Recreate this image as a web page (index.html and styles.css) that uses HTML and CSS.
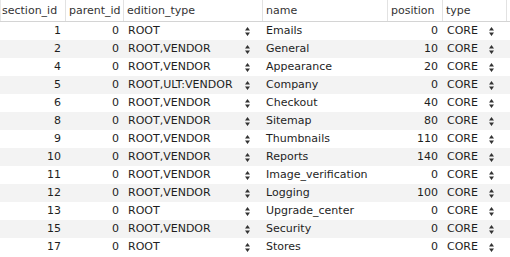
FILE: index.html
```html
<!DOCTYPE html>
<html>
<head>
<meta charset="utf-8">
<link rel="stylesheet" href="styles.css">
</head>
<body>
<div class="grid">
  <div class="row head">
    <div class="c">section_id</div>
    <div class="c">parent_id</div>
    <div class="c">edition_type</div>
    <div class="c">name</div>
    <div class="c">position</div>
    <div class="c">type</div>
    <div class="c end"></div>
  </div>
  <div class="row"><div class="c num">1</div><div class="c num">0</div><div class="c sel"><span>ROOT</span><svg class="spin" viewBox="0 0 5 9"><path d="M0 3.5L2.5 0L5 3.5Z M0 5.5L2.5 9L5 5.5Z"/></svg></div><div class="c">Emails</div><div class="c num">0</div><div class="c sel"><span>CORE</span><svg class="spin" viewBox="0 0 5 9"><path d="M0 3.5L2.5 0L5 3.5Z M0 5.5L2.5 9L5 5.5Z"/></svg></div></div>
  <div class="row"><div class="c num">2</div><div class="c num">0</div><div class="c sel"><span>ROOT,VENDOR</span><svg class="spin" viewBox="0 0 5 9"><path d="M0 3.5L2.5 0L5 3.5Z M0 5.5L2.5 9L5 5.5Z"/></svg></div><div class="c">General</div><div class="c num">10</div><div class="c sel"><span>CORE</span><svg class="spin" viewBox="0 0 5 9"><path d="M0 3.5L2.5 0L5 3.5Z M0 5.5L2.5 9L5 5.5Z"/></svg></div></div>
  <div class="row"><div class="c num">4</div><div class="c num">0</div><div class="c sel"><span>ROOT,VENDOR</span><svg class="spin" viewBox="0 0 5 9"><path d="M0 3.5L2.5 0L5 3.5Z M0 5.5L2.5 9L5 5.5Z"/></svg></div><div class="c">Appearance</div><div class="c num">20</div><div class="c sel"><span>CORE</span><svg class="spin" viewBox="0 0 5 9"><path d="M0 3.5L2.5 0L5 3.5Z M0 5.5L2.5 9L5 5.5Z"/></svg></div></div>
  <div class="row"><div class="c num">5</div><div class="c num">0</div><div class="c sel"><span>ROOT,ULT:VENDOR</span><svg class="spin" viewBox="0 0 5 9"><path d="M0 3.5L2.5 0L5 3.5Z M0 5.5L2.5 9L5 5.5Z"/></svg></div><div class="c">Company</div><div class="c num">0</div><div class="c sel"><span>CORE</span><svg class="spin" viewBox="0 0 5 9"><path d="M0 3.5L2.5 0L5 3.5Z M0 5.5L2.5 9L5 5.5Z"/></svg></div></div>
  <div class="row"><div class="c num">6</div><div class="c num">0</div><div class="c sel"><span>ROOT,VENDOR</span><svg class="spin" viewBox="0 0 5 9"><path d="M0 3.5L2.5 0L5 3.5Z M0 5.5L2.5 9L5 5.5Z"/></svg></div><div class="c">Checkout</div><div class="c num">40</div><div class="c sel"><span>CORE</span><svg class="spin" viewBox="0 0 5 9"><path d="M0 3.5L2.5 0L5 3.5Z M0 5.5L2.5 9L5 5.5Z"/></svg></div></div>
  <div class="row"><div class="c num">8</div><div class="c num">0</div><div class="c sel"><span>ROOT,VENDOR</span><svg class="spin" viewBox="0 0 5 9"><path d="M0 3.5L2.5 0L5 3.5Z M0 5.5L2.5 9L5 5.5Z"/></svg></div><div class="c">Sitemap</div><div class="c num">80</div><div class="c sel"><span>CORE</span><svg class="spin" viewBox="0 0 5 9"><path d="M0 3.5L2.5 0L5 3.5Z M0 5.5L2.5 9L5 5.5Z"/></svg></div></div>
  <div class="row"><div class="c num">9</div><div class="c num">0</div><div class="c sel"><span>ROOT,VENDOR</span><svg class="spin" viewBox="0 0 5 9"><path d="M0 3.5L2.5 0L5 3.5Z M0 5.5L2.5 9L5 5.5Z"/></svg></div><div class="c">Thumbnails</div><div class="c num">110</div><div class="c sel"><span>CORE</span><svg class="spin" viewBox="0 0 5 9"><path d="M0 3.5L2.5 0L5 3.5Z M0 5.5L2.5 9L5 5.5Z"/></svg></div></div>
  <div class="row"><div class="c num">10</div><div class="c num">0</div><div class="c sel"><span>ROOT,VENDOR</span><svg class="spin" viewBox="0 0 5 9"><path d="M0 3.5L2.5 0L5 3.5Z M0 5.5L2.5 9L5 5.5Z"/></svg></div><div class="c">Reports</div><div class="c num">140</div><div class="c sel"><span>CORE</span><svg class="spin" viewBox="0 0 5 9"><path d="M0 3.5L2.5 0L5 3.5Z M0 5.5L2.5 9L5 5.5Z"/></svg></div></div>
  <div class="row"><div class="c num">11</div><div class="c num">0</div><div class="c sel"><span>ROOT,VENDOR</span><svg class="spin" viewBox="0 0 5 9"><path d="M0 3.5L2.5 0L5 3.5Z M0 5.5L2.5 9L5 5.5Z"/></svg></div><div class="c">Image_verification</div><div class="c num">0</div><div class="c sel"><span>CORE</span><svg class="spin" viewBox="0 0 5 9"><path d="M0 3.5L2.5 0L5 3.5Z M0 5.5L2.5 9L5 5.5Z"/></svg></div></div>
  <div class="row"><div class="c num">12</div><div class="c num">0</div><div class="c sel"><span>ROOT,VENDOR</span><svg class="spin" viewBox="0 0 5 9"><path d="M0 3.5L2.5 0L5 3.5Z M0 5.5L2.5 9L5 5.5Z"/></svg></div><div class="c">Logging</div><div class="c num">100</div><div class="c sel"><span>CORE</span><svg class="spin" viewBox="0 0 5 9"><path d="M0 3.5L2.5 0L5 3.5Z M0 5.5L2.5 9L5 5.5Z"/></svg></div></div>
  <div class="row"><div class="c num">13</div><div class="c num">0</div><div class="c sel"><span>ROOT</span><svg class="spin" viewBox="0 0 5 9"><path d="M0 3.5L2.5 0L5 3.5Z M0 5.5L2.5 9L5 5.5Z"/></svg></div><div class="c">Upgrade_center</div><div class="c num">0</div><div class="c sel"><span>CORE</span><svg class="spin" viewBox="0 0 5 9"><path d="M0 3.5L2.5 0L5 3.5Z M0 5.5L2.5 9L5 5.5Z"/></svg></div></div>
  <div class="row"><div class="c num">15</div><div class="c num">0</div><div class="c sel"><span>ROOT,VENDOR</span><svg class="spin" viewBox="0 0 5 9"><path d="M0 3.5L2.5 0L5 3.5Z M0 5.5L2.5 9L5 5.5Z"/></svg></div><div class="c">Security</div><div class="c num">0</div><div class="c sel"><span>CORE</span><svg class="spin" viewBox="0 0 5 9"><path d="M0 3.5L2.5 0L5 3.5Z M0 5.5L2.5 9L5 5.5Z"/></svg></div></div>
  <div class="row"><div class="c num">17</div><div class="c num">0</div><div class="c sel"><span>ROOT</span><svg class="spin" viewBox="0 0 5 9"><path d="M0 3.5L2.5 0L5 3.5Z M0 5.5L2.5 9L5 5.5Z"/></svg></div><div class="c">Stores</div><div class="c num">0</div><div class="c sel"><span>CORE</span><svg class="spin" viewBox="0 0 5 9"><path d="M0 3.5L2.5 0L5 3.5Z M0 5.5L2.5 9L5 5.5Z"/></svg></div></div>
</div>
</body>
</html>
```
FILE: styles.css
```css
html, body { margin: 0; padding: 0; background: #fff; }
body {
  font-family: "DejaVu Sans", "Liberation Sans", sans-serif;
  font-size: 11px;
  color: #1e1e1e;
  overflow: hidden;
}
.grid { width: 510px; }
.row {
  display: grid;
  grid-template-columns: 65px 58px 139px 125px 55px 64px 4px;
  height: 18px;
  align-items: center;
}
.row:nth-child(odd) { background: #f3f3f3; }
.row.head {
  height: 21px;
  background: #fff;
  border-bottom: 1px solid #d4d4d4;
  color: #333;
}
.c {
  white-space: nowrap;
  overflow: hidden;
  padding: 0 4px;
  line-height: 18px;
}
.head .c {
  height: 21px;
  line-height: 21px;
  border-left: 1px solid #e2e2e2;
  padding-left: 3px;
}
.head .c:first-child { border-left: 1px solid #e8e8e8; padding-left: 1px; }
.head .end { padding: 0; }
.num { text-align: right; }
.sel {
  display: flex;
  align-items: center;
  justify-content: space-between;
  padding-left: 5px;
  padding-right: 12px;
}
.spin { width: 5px; height: 9px; fill: #333; flex: none; }
```
